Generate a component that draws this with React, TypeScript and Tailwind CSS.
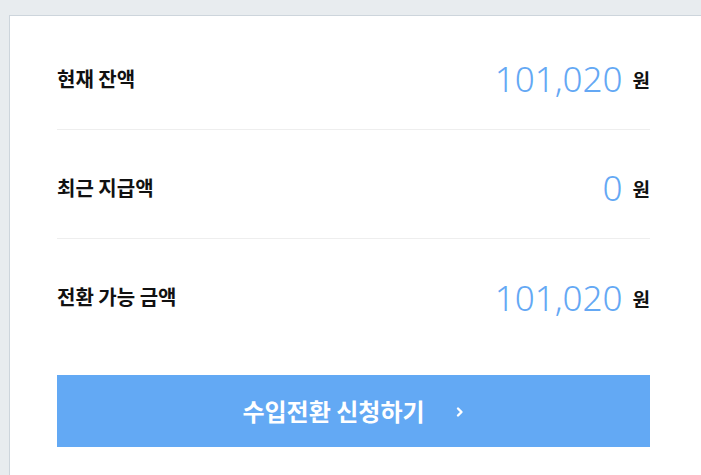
import React from 'react'

const KR = { fontFamily: '"Noto Sans CJK KR", "Noto Sans", sans-serif' }
const NUM = { fontFamily: '"Noto Sans", "Noto Sans CJK KR", sans-serif' }

interface RowProps {
  label: string
  amount: string
  last?: boolean
}

function BalanceRow({ label, amount, last }: RowProps) {
  return (
    <div className={`flex h-[109px] items-center justify-between pt-[7px] ${last ? '' : 'border-b border-[#eeeeee]'}`}>
      <span className="text-[20px] font-semibold text-[#111]" style={KR}>
        {label}
      </span>
      <div className="flex items-center gap-[10px]">
        <span className="text-[35px] font-light leading-none text-[#64a8f4]" style={NUM}>
          {amount}
        </span>
        <span className="mt-[4px] text-[19px] font-bold text-[#111]" style={KR}>
          원
        </span>
      </div>
    </div>
  )
}

export default function App() {
  return (
    <div className="h-[475px] w-[701px] overflow-hidden bg-[#e8ecef] pl-[9px] pt-[15px]">
      <div className="h-full border-l border-t border-[#cdd5dc] bg-white pl-[47px] pr-[51px] pt-[5px]">
        <BalanceRow label="현재 잔액" amount="101,020" />
        <BalanceRow label="최근 지급액" amount="0" />
        <BalanceRow label="전환 가능 금액" amount="101,020" last />

        <button
          className="mt-[27px] flex h-[72px] w-full items-center justify-center bg-[#63a9f4] text-white"
          style={KR}
        >
          <span className="text-[24px] font-bold">수입전환 신청하기</span>
          <svg className="ml-[30px] mt-[2px]" width="10" height="12" viewBox="0 0 10 12" fill="none">
            <path d="M3 2.5 L6.5 6 L3 9.5" stroke="white" strokeWidth="2.4" strokeLinecap="round" strokeLinejoin="round" />
          </svg>
        </button>
      </div>
    </div>
  )
}
